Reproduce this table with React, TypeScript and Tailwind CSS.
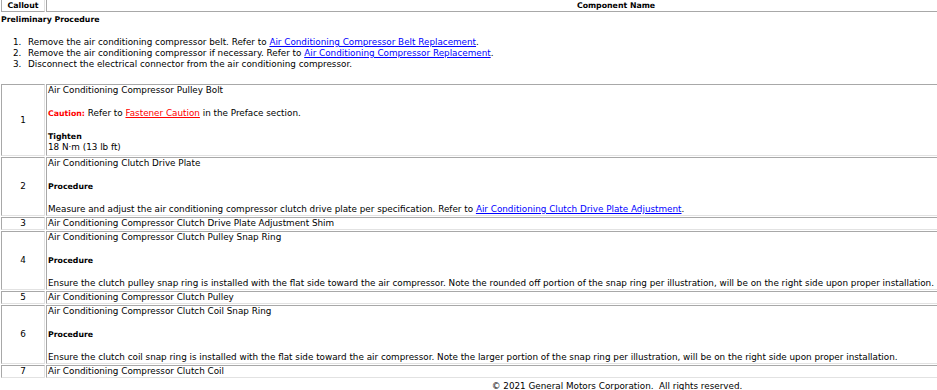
import React from "react";

// ─── Component data ───────────────────────────────────────────
type Row = {
  callout: string;
  title: string;
  body?: React.ReactNode;
};

const Link = ({ children }: { children: React.ReactNode }) => (
  <a href="#" className="text-[#0000ff] underline">
    {children}
  </a>
);

const Bold = ({ children }: { children: React.ReactNode }) => (
  <div className="font-bold text-[7.8px]">{children}</div>
);

const ROWS: Row[] = [
  {
    callout: "1",
    title: "Air Conditioning Compressor Pulley Bolt",
    body: (
      <>
        <div className="h-[12px]" />
        <div>
          <span className="font-bold text-[7.8px] text-[#ff0000]">Caution:</span> Refer to{" "}
          <a href="#" className="text-[#ff0000] underline">
            Fastener Caution
          </a>{" "}
          in the Preface section.
        </div>
        <div className="h-[12px]" />
        <Bold>Tighten</Bold>
        <div className="pb-[2px]">18 N·m (13 lb ft)</div>
      </>
    ),
  },
  {
    callout: "2",
    title: "Air Conditioning Clutch Drive Plate",
    body: (
      <>
        <div className="h-[12px]" />
        <Bold>Procedure</Bold>
        <div className="h-[12px]" />
        <div>
          Measure and adjust the air conditioning compressor clutch drive plate per specification. Refer to{" "}
          <Link>Air Conditioning Clutch Drive Plate Adjustment</Link>.
        </div>
      </>
    ),
  },
  { callout: "3", title: "Air Conditioning Compressor Clutch Drive Plate Adjustment Shim" },
  {
    callout: "4",
    title: "Air Conditioning Compressor Clutch Pulley Snap Ring",
    body: (
      <>
        <div className="h-[12px]" />
        <Bold>Procedure</Bold>
        <div className="h-[12px]" />
        <div>
          Ensure the clutch pulley snap ring is installed with the flat side toward the air compressor. Note the
          rounded off portion of the snap ring per illustration, will be on the right side upon proper installation.
        </div>
      </>
    ),
  },
  { callout: "5", title: "Air Conditioning Compressor Clutch Pulley" },
  {
    callout: "6",
    title: "Air Conditioning Compressor Clutch Coil Snap Ring",
    body: (
      <>
        <div className="h-[12px]" />
        <Bold>Procedure</Bold>
        <div className="h-[12px]" />
        <div>
          Ensure the clutch coil snap ring is installed with the flat side toward the air compressor. Note the larger
          portion of the snap ring per illustration, will be on the right side upon proper installation.
        </div>
      </>
    ),
  },
  { callout: "7", title: "Air Conditioning Compressor Clutch Coil" },
];

const cell =
  "border border-t-[#a8a8a8] border-l-[#a8a8a8] border-b-[#e2e2e2] border-r-[#e2e2e2] px-[1px] align-middle";

export default function App() {
  return (
    <div className="w-[1234px] bg-white text-black font-['DejaVu_Sans',Verdana,sans-serif] text-[8.8px] leading-[11px]">
      <table className="w-[1186px] border-separate border-spacing-[1px] -mt-[1px]">
        <thead>
          <tr>
            <th className="w-[44px] border-r border-b border-l border-r-[#e2e2e2] border-b-[#a8a8a8] border-l-[#a8a8a8] text-[7.8px] font-bold text-center">
              Callout
            </th>
            <th className="border-l border-b border-l-[#a8a8a8] border-b-[#a8a8a8] text-[7.8px] font-bold text-center">
              Component Name
            </th>
          </tr>
        </thead>
        <tbody>
          <tr>
            <td colSpan={2} className="p-0 pt-[1px] pb-[13px] text-left">
              <Bold>Preliminary Procedure</Bold>
              <div className="h-[12px]" />
              <ol className="pl-[12px]">
                <li className="flex">
                  <span className="w-[15px]">1.</span>
                  <span>
                    Remove the air conditioning compressor belt. Refer to{" "}
                    <Link>Air Conditioning Compressor Belt Replacement</Link>.
                  </span>
                </li>
                <li className="flex">
                  <span className="w-[15px]">2.</span>
                  <span>
                    Remove the air conditioning compressor if necessary. Refer to{" "}
                    <Link>Air Conditioning Compressor Replacement</Link>.
                  </span>
                </li>
                <li className="flex">
                  <span className="w-[15px]">3.</span>
                  <span>Disconnect the electrical connector from the air conditioning compressor.</span>
                </li>
              </ol>
            </td>
          </tr>
          {ROWS.map((row) => (
            <tr key={row.callout}>
              <td className={`${cell} text-center`}>{row.callout}</td>
              <td className={`${cell} text-left`}>
                <div>{row.title}</div>
                {row.body}
              </td>
            </tr>
          ))}
        </tbody>
      </table>
      <div className="text-center pt-[2px] whitespace-pre">
        {"© 2021 General Motors Corporation.  All rights reserved."}
      </div>
    </div>
  );
}
